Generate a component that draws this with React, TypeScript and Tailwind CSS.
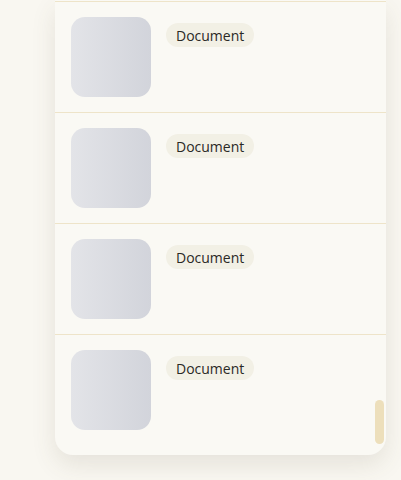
const rows = [0, 1, 2, 3];

export default function App() {
    return (
        <div className="w-[401px] h-[480px] overflow-hidden bg-[#f9f7f1] pl-[55px]" style={{ fontFamily: '"Open Sans", "Noto Sans", sans-serif' }}>
            <div className="relative w-[331px] h-[455px] bg-[#faf9f4] rounded-b-[18px] shadow-[0_10px_25px_rgba(90,80,60,0.12)] pb-[9px]">
                <div className="h-[2px] border-b border-[#eee4c9]" />
                {rows.map((i) => (
                    <div key={i} className={`flex items-start gap-[15px] px-4 py-[15px] ${i < 3 ? "border-b border-[#eee4c9]" : ""}`}>
                        <div className="w-[80px] h-[80px] rounded-[14px] bg-gradient-to-r from-[#e3e4e8] to-[#d2d4db]" />
                        <span className="mt-[6px] rounded-full bg-[#f2f0e5] px-[10px] h-[24px] flex items-center text-[14px] text-[#2a2925]">Document</span>
                    </div>
                ))}
                <div className="absolute right-[2px] bottom-[11px] w-[9px] h-[44px] rounded-full bg-[#eddfbb]" />
            </div>
        </div>
    );
}
